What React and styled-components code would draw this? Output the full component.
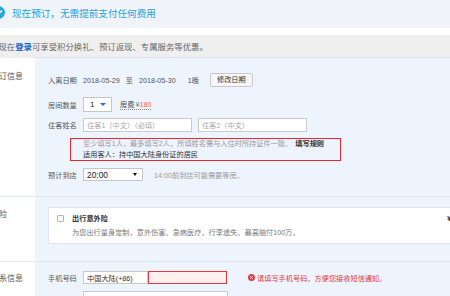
import React from "react";
import styled, { createGlobalStyle } from "styled-components";

const GlobalStyle = createGlobalStyle`
  html, body { margin: 0; padding: 0; background: #fff; }
  body {
    overflow: hidden;
    font-family: "Liberation Sans", "Noto Sans CJK SC", sans-serif;
  }
  * { box-sizing: border-box; }
`;

const Page = styled.div`
  width: 450px;
  height: 296px;
  overflow: hidden;
  color: #555;
  font-size: 7.2px;
`;

const Banner = styled.div`
  height: 28px;
  background: #f0f4f9;
  display: flex;
  align-items: center;
  gap: 7.5px;
`;

const BannerIcon = styled.svg`
  width: 13px;
  height: 13px;
  flex: none;
  margin-left: -8.5px;
  margin-top: -3px;
`;

const BannerText = styled.span`
  font-size: 9.6px;
  line-height: 1;
  color: #25a2da;
  white-space: nowrap;
`;

const LoginBar = styled.div`
  margin-top: 7px;
  height: 22px;
  background: #efefef;
  display: flex;
  align-items: center;
  position: relative;
  z-index: 1;
  box-shadow: 0 1px 1px rgba(0, 0, 0, 0.07);
`;

const LoginText = styled.span`
  margin-left: -1.5px;
  font-size: 8.4px;
  color: #666;
  white-space: nowrap;
`;

const LoginLink = styled.a`
  color: #1060c8;
  font-weight: bold;
  text-decoration: none;
`;

const Section = styled.section`
  display: grid;
  grid-template-columns: 35px 1fr;
  border-bottom: 1px solid #dfe7f0;
`;

const SideCell = styled.div`
  background: #fff;
  padding-top: ${(p) => p.$top}px;
`;

const SideText = styled.div`
  margin-left: -9px;
  font-size: 8px;
  line-height: 11px;
  color: #555;
  white-space: nowrap;
`;

const Main = styled.div`
  background: #edf4fd;
  padding: ${(p) => p.$pad};
  min-width: 0;
`;

const Row = styled.div`
  display: flex;
  align-items: center;
  height: ${(p) => p.$h}px;
  margin-top: ${(p) => p.$mt || 0}px;
  white-space: nowrap;
`;

const FieldLabel = styled.span`
  width: 35px;
  flex: none;
  color: #555;
`;

const Plain = styled.span`
  margin-left: ${(p) => p.$ml || 0}px;
  color: ${(p) => p.$color || "#555"};
`;

const Button = styled.button`
  margin-left: 11px;
  height: 14px;
  padding: 0 6px;
  border: 1px solid #c9c9c9;
  border-radius: 2px;
  background: #f6f6f6;
  color: #333;
  font-family: inherit;
  font-size: 7.2px;
  line-height: 12px;
`;

const Select = styled.div`
  width: ${(p) => p.$w}px;
  height: ${(p) => p.$h}px;
  border: 1px solid #c6c6c6;
  background: #fff;
  display: flex;
  align-items: center;
  padding-left: ${(p) => p.$pl}px;
  color: #222;
  font-size: ${(p) => p.$fs}px;
`;

const Caret = styled.span`
  margin-left: auto;
  margin-right: ${(p) => p.$mr}px;
  width: 0;
  height: 0;
  border-left: ${(p) => p.$w / 2}px solid transparent;
  border-right: ${(p) => p.$w / 2}px solid transparent;
  border-top: 3px solid ${(p) => p.$color};
`;

const Fee = styled.span`
  margin-left: 8px;
  border-bottom: 1px dotted #888;
  line-height: 9px;
  color: #444;
`;

const FeeYen = styled.span`
  color: #888;
  margin-left: 1px;
`;

const FeeNum = styled.span`
  color: #ff6a1f;
`;

const TextInput = styled.input`
  width: ${(p) => p.$w}px;
  height: ${(p) => p.$h}px;
  margin-left: ${(p) => p.$ml || 0}px;
  padding: 0 3px;
  border: 1px solid ${(p) => (p.$error ? "#e4393c" : "#cbcbcb")};
  background: ${(p) => (p.$error ? "#fff0f0" : "#fff")};
  font-family: inherit;
  font-size: 7.2px;
  color: #333;
  outline: none;
  &::placeholder { color: #a8a8a8; }
`;

const Hint = styled.div`
  position: relative;
  margin: 5.5px 0 0 35px;
  line-height: 11px;
  white-space: nowrap;
`;

const HintLine = styled.div`
  color: ${(p) => p.$color};
`;

const RuleLink = styled.a`
  margin-left: 3px;
  color: #333;
  font-weight: bold;
  text-decoration: none;
`;

const Annotation = styled.div`
  position: absolute;
  left: -13px;
  top: 0.5px;
  width: 271px;
  height: 23px;
  border: 1px solid #e8262b;
  pointer-events: none;
`;

const Card = styled.div`
  display: flex;
  align-items: flex-start;
  height: 37px;
  margin-right: -30px;
  padding: 4.5px 0 0 8px;
  background: #fff;
  border: 1px solid #dfe6ef;
`;

const Check = styled.span`
  flex: none;
  width: 7px;
  height: 7px;
  margin-top: 2.5px;
  border: 1px solid #b5b5b5;
  border-radius: 1px;
  background: #f7f7f7;
`;

const Info = styled.div`
  flex: 0 0 375px;
  margin-left: 8px;
  white-space: nowrap;
`;

const InfoTitle = styled.div`
  line-height: 11px;
  font-weight: bold;
  color: #333;
`;

const InfoDesc = styled.div`
  margin-top: 3px;
  line-height: 11px;
  color: #777;
`;

const Price = styled.span`
  line-height: 11px;
  font-weight: bold;
  color: #333;
  font-size: 8px;
`;

const Country = styled.div`
  width: 65px;
  height: 13px;
  border: 1px solid #c8c8c8;
  background: #fff;
  display: flex;
  align-items: center;
  padding-left: 3px;
  color: #333;
`;

const ErrorMsg = styled.span`
  margin-left: 21px;
  display: flex;
  align-items: center;
  gap: 2px;
  color: #e4393c;
`;

const ErrorIcon = styled.svg`
  width: 7px;
  height: 7px;
  flex: none;
`;

export default function App() {
  return (
    <Page>
      <GlobalStyle />
      <Banner>
        <BannerIcon viewBox="0 0 13 13">
          <circle cx="6.5" cy="6.5" r="6.5" fill="#1fa6dc" />
          <path d="M3.6 6.8 L5.8 9 L10 4.4" stroke="#fff" strokeWidth="1.5" fill="none" />
        </BannerIcon>
        <BannerText>现在预订，无需提前支付任何费用</BannerText>
      </Banner>

      <LoginBar>
        <LoginText>
          现在<LoginLink href="#">登录</LoginLink>可享受积分换礼、预订返现、专属服务等优惠。
        </LoginText>
      </LoginBar>

      <Section>
        <SideCell $top={13.5}>
          <SideText>预订信息</SideText>
        </SideCell>
        <Main $pad="16px 0 15px 13px">
          <Row $h={14}>
            <FieldLabel>入离日期</FieldLabel>
            <Plain>2018-05-29</Plain>
            <Plain $ml={6}>至</Plain>
            <Plain $ml={6}>2018-05-30</Plain>
            <Plain $ml={12}>1晚</Plain>
            <Button>修改日期</Button>
          </Row>
          <Row $h={15} $mt={10}>
            <FieldLabel>房间数量</FieldLabel>
            <Select $w={29} $h={15} $pl={6} $fs={8}>
              1
              <Caret $w={6} $mr={5} $color="#2d6fd8" />
            </Select>
            <Fee>
              房费<FeeYen>¥</FeeYen>
              <FeeNum>180</FeeNum>
            </Fee>
          </Row>
          <Row $h={14} $mt={6}>
            <FieldLabel>住客姓名</FieldLabel>
            <TextInput $w={109} $h={14} placeholder="住客1（中文）（必填）" />
            <TextInput $w={109} $h={14} $ml={6} placeholder="住客2（中文）" />
          </Row>
          <Hint>
            <HintLine $color="#999">
              至少填写1人，最多填写2人，所填姓名需与入住时所持证件一致。
              <RuleLink href="#">填写规则</RuleLink>
            </HintLine>
            <HintLine $color="#333">适用客人：持中国大陆身份证的居民</HintLine>
            <Annotation />
          </Hint>
          <Row $h={13} $mt={8.5}>
            <FieldLabel>预计到店</FieldLabel>
            <Select $w={60} $h={13} $pl={3} $fs={8.4}>
              20:00
              <Caret $w={5} $mr={5} $color="#111" />
            </Select>
            <Plain $ml={11} $color="#9a9a9a">14:00前到店可能需要等房。</Plain>
          </Row>
        </Main>
      </Section>

      <Section>
        <SideCell $top={11.5}>
          <SideText>保险</SideText>
        </SideCell>
        <Main $pad="10px 0 17px 13px">
          <Card>
            <Check />
            <Info>
              <InfoTitle>出行意外险</InfoTitle>
              <InfoDesc>为您出行量身定制，意外伤害、急病医疗、行李遗失、最高赔付100万。</InfoDesc>
            </Info>
            <Price>¥</Price>
          </Card>
        </Main>
      </Section>

      <Section>
        <SideCell $top={10.5}>
          <SideText>联系信息</SideText>
        </SideCell>
        <Main $pad="9px 0 20px 13px">
          <Row $h={13}>
            <FieldLabel>手机号码</FieldLabel>
            <Country>中国大陆(+86)</Country>
            <TextInput $w={79} $h={13} $error />
            <ErrorMsg>
              <ErrorIcon viewBox="0 0 7 7">
                <circle cx="3.5" cy="3.5" r="3.5" fill="#e4393c" />
                <path d="M2.2 2.2 L4.8 4.8 M4.8 2.2 L2.2 4.8" stroke="#fff" strokeWidth="1" />
              </ErrorIcon>
              请填写手机号码，方便您接收短信通知。
            </ErrorMsg>
          </Row>
          <Row $h={13} $mt={7}>
            <FieldLabel />
            <TextInput $w={145} $h={13} />
          </Row>
        </Main>
      </Section>
    </Page>
  );
}
